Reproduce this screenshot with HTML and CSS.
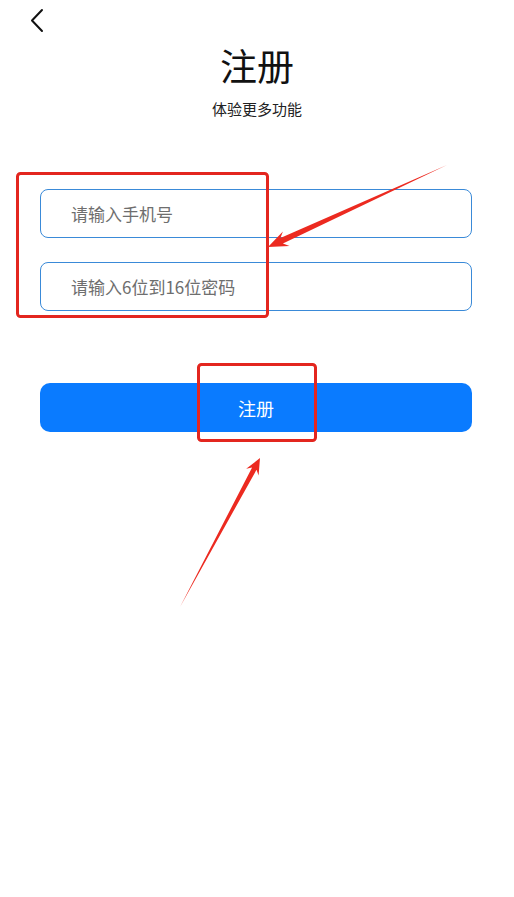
FILE: index.html
```html
<!DOCTYPE html>
<html lang="zh-CN">
<head>
<meta charset="utf-8">
<title>注册</title>
<link rel="stylesheet" href="styles.css">
</head>
<body>
<div class="page">
  <header class="topbar">
    <svg class="back" width="20" height="26" viewBox="0 0 20 26"><path d="M13 3 L3 13.5 L13 24" fill="none" stroke="#111" stroke-width="2" stroke-linecap="round" stroke-linejoin="round"/></svg>
  </header>
  <h1 class="title">注册</h1>
  <p class="subtitle">体验更多功能</p>
  <form class="form">
    <input class="field" type="text" placeholder="请输入手机号">
    <input class="field" type="password" placeholder="请输入6位到16位密码">
    <button class="submit" type="button">注册</button>
  </form>
  <svg class="annot" width="514" height="897" viewBox="0 0 514 897">
    <rect x="17.5" y="173.5" width="250" height="143" rx="3" fill="none" stroke="#e3261f" stroke-width="3"/>
    <rect x="198.5" y="364.5" width="117" height="76" rx="3" fill="none" stroke="#e3261f" stroke-width="3"/>
    <polygon points="447,165 282.9,243.5 289.5,246 268,247 282.9,231.4 280.4,238.1" fill="#ec2a20"/>
    <polygon points="180,607 256.5,469.8 258.6,475.4 260,458 246.2,468.8 252.1,467.4" fill="#ec2a20"/>
  </svg>
</div>
</body>
</html>
```

FILE: styles.css
```css
html, body {
  margin: 0;
  padding: 0;
  background: #ffffff;
}
body {
  font-family: "Noto Sans CJK SC", "Noto Sans", sans-serif;
  color: #111;
}
.page {
  position: relative;
  width: 514px;
  min-height: 897px;
}
.topbar {
  height: 40px;
  display: flex;
  align-items: flex-start;
  padding: 7px 0 0 29px;
  box-sizing: border-box;
}
.back {
  display: block;
}
.title {
  margin: 0;
  text-align: center;
  font-size: 37px;
  font-weight: 400;
  line-height: 50px;
  color: #111;
}
.subtitle {
  margin: 8px 0 0;
  text-align: center;
  font-size: 15px;
  line-height: 22px;
  color: #222;
}
.form {
  display: flex;
  flex-direction: column;
  padding: 69px 42px 0 40px;
}
.field {
  height: 49px;
  box-sizing: border-box;
  border: 1.5px solid #3a8ad8;
  border-radius: 8px;
  padding: 0 0 0 30px;
  font-family: "Noto Sans CJK SC", sans-serif;
  font-size: 17px;
  color: #333;
  outline: none;
  background: #fff;
}
.field + .field {
  margin-top: 24px;
}
.field::placeholder {
  color: #6e6e6e;
}
.submit {
  margin-top: 72px;
  height: 49px;
  border: none;
  border-radius: 10px;
  background: #0a7bff;
  color: #fff;
  font-family: "Noto Sans CJK SC", sans-serif;
  font-size: 18px;
  padding: 0;
}
.annot {
  position: absolute;
  left: 0;
  top: 0;
  pointer-events: none;
}
```
